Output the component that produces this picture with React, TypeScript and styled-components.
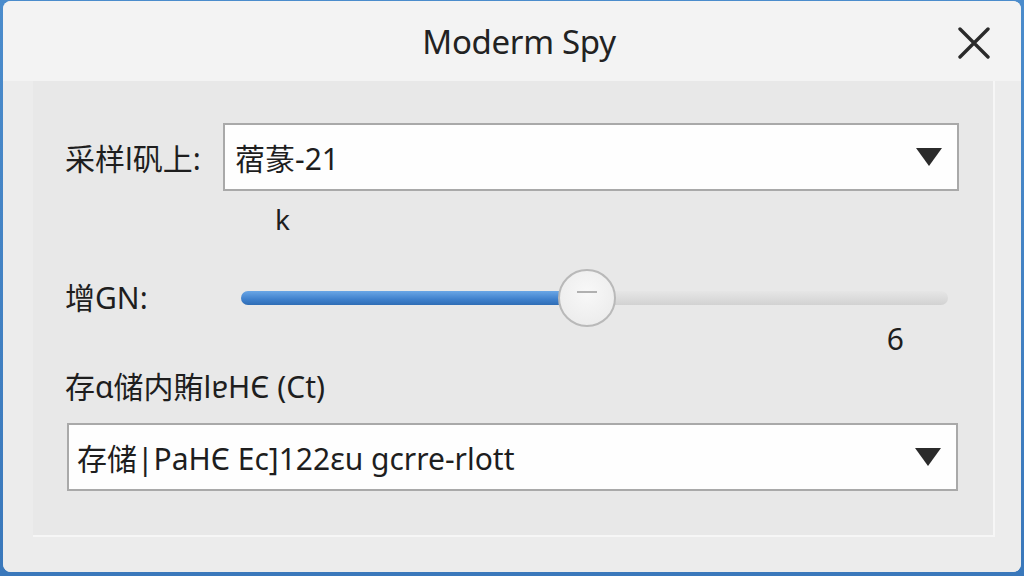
import styled, { createGlobalStyle } from 'styled-components';

const GlobalStyle = createGlobalStyle`
  html, body {
    margin: 0;
    padding: 0;
    width: 1024px;
    height: 576px;
    overflow: hidden;
    background: #3d7ec2;
  }
  * { box-sizing: border-box; }
`;

const FONT = `"Noto Sans", "Noto Sans CJK SC", sans-serif`;

const Arrow = () => (
  <svg width="28" height="20" viewBox="0 0 28 20">
    <polygon points="1,1 27,1 14,19" fill="#2b2b2b" />
  </svg>
);

const THUMB_AT = ((587 - 241) / (948 - 241)) * 100;

const App: React.FC = () => {
  return (
    <>
      <GlobalStyle />
      <Frame>
        <Window>
          <TitleBar>
            <Title>Moderm Spy</Title>
            <Close aria-label="close">
              <svg width="34" height="32" viewBox="0 0 34 32">
                <path d="M3 2 L31 30 M31 2 L3 30" stroke="#2a2a2a" strokeWidth="3.4" strokeLinecap="round" />
              </svg>
            </Close>
          </TitleBar>
          <Body>
            <Panel>
              <FieldRow>
                <Label>采样l矾上:</Label>
                <Select>
                  <SelectText>蓿蒃-21</SelectText>
                  <Arrow />
                </Select>
              </FieldRow>
              <Unit>k</Unit>
              <SliderRow>
                <Label>增GN:</Label>
                <Track>
                  <Fill style={{ width: `${THUMB_AT}%` }} />
                  <Thumb style={{ left: `${THUMB_AT}%` }}>
                    <ThumbMark />
                  </Thumb>
                </Track>
              </SliderRow>
              <Value>6</Value>
              <StackLabel>存ɑ储内賄lɐHЄ (Ct)</StackLabel>
              <Select wide>
                <SelectText>存储|PaHЄ Ec]122ɛu gcrre-rlott</SelectText>
                <Arrow />
              </Select>
            </Panel>
          </Body>
        </Window>
      </Frame>
    </>
  );
};
export default App;

const Frame = styled.div`
  width: 1024px;
  height: 576px;
  padding: 1px 3px 4px 3px;
  background: linear-gradient(180deg, #4b8ccc, #3a78bb);
`;

const Window = styled.div`
  width: 100%;
  height: 100%;
  border-radius: 8px;
  overflow: hidden;
  background: #ededed;
  display: flex;
  flex-direction: column;
  font-family: ${FONT};
  color: #1e1e1e;
`;

const TitleBar = styled.div`
  height: 80px;
  flex-shrink: 0;
  background: #f3f3f3;
  display: flex;
  align-items: center;
  justify-content: center;
  position: relative;
`;

const Title = styled.div`
  font-size: 33px;
  letter-spacing: -0.3px;
  color: #222;
  margin-left: 14px;
`;

const Close = styled.div`
  position: absolute;
  right: 30px;
  top: 26px;
  width: 34px;
  height: 32px;
  display: flex;
`;

const Body = styled.div`
  flex: 1;
  background: #ececec;
  padding: 0 26px 35px 30px;
  display: flex;
`;

const Panel = styled.div`
  flex: 1;
  background: #e8e8e8;
  border-right: 2px solid #f6f6f6;
  border-bottom: 2px solid #f6f6f6;
  padding: 42px 34px 0 32px;
  display: flex;
  flex-direction: column;
`;

const FieldRow = styled.div`
  display: flex;
  align-items: center;
  gap: 18px;
`;

const Label = styled.div`
  font-size: 30px;
  width: 140px;
  flex-shrink: 0;
  white-space: nowrap;
`;

const Select = styled.div<{ wide?: boolean }>`
  height: 68px;
  background: #fefefe;
  border: 2px solid #a9a9a9;
  display: flex;
  align-items: center;
  justify-content: space-between;
  padding: 0 14px 0 ${(p) => (p.wide ? '8px' : '10px')};
  margin: ${(p) => (p.wide ? '16px 0 0 2px' : '0')};
  width: ${(p) => (p.wide ? '891px' : 'auto')};
  flex: ${(p) => (p.wide ? 'none' : '1')};
`;

const SelectText = styled.span`
  font-size: 30px;
  color: #1e1e1e;
  white-space: nowrap;
`;

const Unit = styled.div`
  font-size: 28px;
  margin: 8px 0 0 210px;
  height: 40px;
  line-height: 40px;
`;

const SliderRow = styled.div`
  display: flex;
  align-items: center;
  gap: 36px;
  margin-top: 22px;
  height: 70px;
`;

const Track = styled.div`
  position: relative;
  width: 707px;
  height: 14px;
  border-radius: 7px;
  background: linear-gradient(180deg, #e6e6e6, #d2d2d2);
  margin-top: 4px;
`;

const Fill = styled.div`
  height: 100%;
  border-radius: 7px 0 0 7px;
  background: linear-gradient(180deg, #6aa6e6 0%, #3f80cc 60%, #2f6db5 100%);
`;

const Thumb = styled.div`
  position: absolute;
  top: 50%;
  width: 58px;
  height: 58px;
  margin-left: -29px;
  margin-top: -29px;
  border-radius: 50%;
  border: 2px solid #b9b9b9;
  background: radial-gradient(circle at 50% 40%, #f8f8f8, #e9e9e9);
  display: flex;
  justify-content: center;
`;

const ThumbMark = styled.div`
  width: 20px;
  height: 2px;
  background: #b0b0b0;
  margin-top: 20px;
`;

const Value = styled.div`
  font-size: 30px;
  align-self: flex-end;
  margin-right: 55px;
  height: 40px;
  line-height: 40px;
  margin-top: -12px;
`;

const StackLabel = styled.div`
  font-size: 30px;
  margin-top: 8px;
  height: 40px;
  line-height: 40px;
  white-space: nowrap;
`;
